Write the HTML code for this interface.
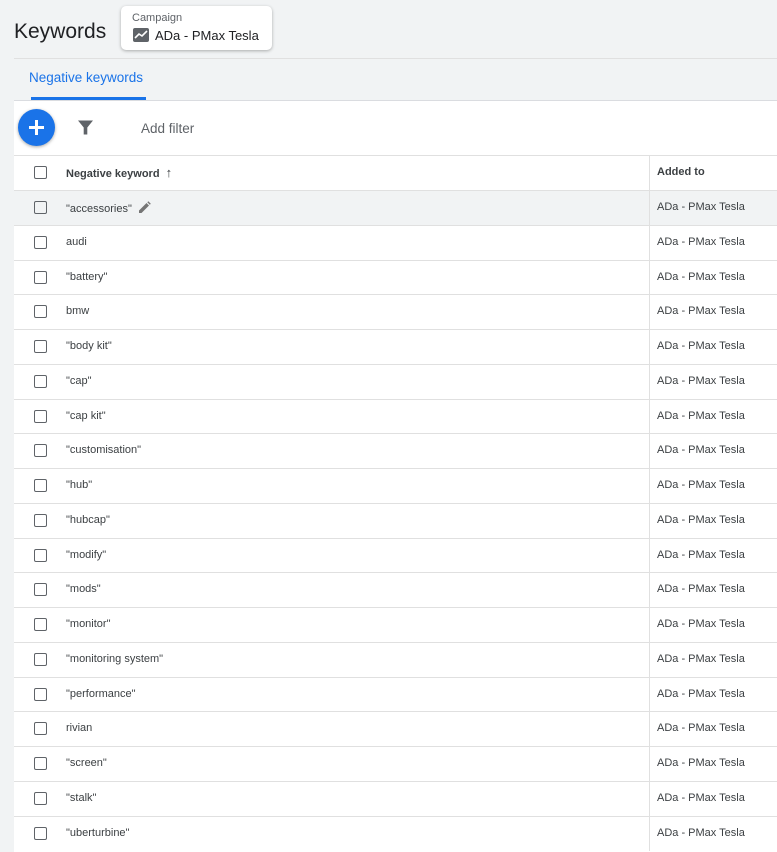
<!DOCTYPE html>
<html><head><style>
*{box-sizing:border-box;margin:0;padding:0}
body{width:777px;height:852px;overflow:hidden;background:#f1f3f4;font-family:"Liberation Sans",Arial,sans-serif;position:relative}
.title{position:absolute;left:14px;top:20px;font-size:21px;color:#202124}
.camp{position:absolute;left:121px;top:6px;width:151px;height:44px;background:#fff;border-radius:5px;box-shadow:0 1px 3px rgba(0,0,0,.3)}
.camp .l{position:absolute;left:11px;top:6px;font-size:11px;color:#5f6368}
.camp .v{position:absolute;left:34px;top:22px;font-size:13px;color:#202124}
.camp svg{position:absolute;left:12px;top:22px}
.hl{position:absolute;left:14px;top:58px;right:0;height:1px;background:#e0e0e0}
.tab{position:absolute;left:29px;top:70px;font-size:13.5px;color:#1a73e8}
.tabline{position:absolute;left:31px;top:97px;width:115px;height:3px;background:#1a73e8}
.main{position:absolute;left:14px;top:100px;right:0;bottom:0;background:#fff;border-top:1px solid #dadce0}
.fab{position:absolute;left:4px;top:8px;width:37px;height:37px;border-radius:50%;background:#1a73e8;box-shadow:0 1px 3px rgba(0,0,0,.35)}
.fab:before,.fab:after{content:"";position:absolute;background:#fff;left:11px;top:17px;width:15px;height:3px}
.fab:after{left:17px;top:11px;width:3px;height:15px}
.filt{position:absolute;left:63px;top:18px}
.addf{position:absolute;left:127px;top:20px;font-size:13.5px;color:#5f6368}
.row{position:absolute;left:0;right:0;height:35px;border-top:1px solid #e0e0e0;font-size:11px;color:#3c4043}
.cb{position:absolute;left:20px;top:10px;width:13px;height:13px;border:1.5px solid #5f6368;border-radius:2px}
.k{position:absolute;left:52px;top:10px}
.a{position:absolute;left:643px;top:10px}
.div{position:absolute;left:635px;top:0;bottom:0;width:1px;background:#e0e0e0}
.hdr{font-weight:bold;color:#3c4043}
</style></head><body>
<div class="title">Keywords</div>
<div class="camp"><div class="l">Campaign</div>
<svg width="16" height="14" viewBox="0 0 16 14"><rect x="0" y="0" width="16" height="14" rx="2" fill="#5f6368"/><path d="M2 10 L6 6 L9 8 L14 3" stroke="#fff" stroke-width="1.6" fill="none"/></svg>
<div class="v">ADa - PMax Tesla</div></div>
<div class="hl"></div>
<div class="tab">Negative keywords</div>
<div class="tabline"></div>
<div class="main">
<div class="fab"></div>
<svg class="filt" width="17" height="17" viewBox="0 0 17 17"><path d="M1 1.5 H16 L10.3 8.5 V15.5 H6.7 V8.5 Z" fill="#5f6368"/></svg>
<div class="addf">Add filter</div>
<div id="rows"></div>
</div>
<script>
var k=['"accessories"','audi','"battery"','bmw','"body kit"','"cap"','"cap kit"','"customisation"','"hub"','"hubcap"','"modify"','"mods"','"monitor"','"monitoring system"','"performance"','rivian','"screen"','"stalk"','"uberturbine"'];
var h='<div class="row hdr" style="top:54px"><div class="cb"></div><div class="k" style="top:9px">Negative keyword &nbsp;<span style="font-weight:normal;font-size:13px">&#8593;</span></div><div class="div"></div><div class="a">Added to</div></div>';
for(var i=0;i<k.length;i++){var t=89+i*34.75;
h+='<div class="row" style="top:'+t+'px;'+(i==0?'background:#f1f3f4':'')+'"><div class="cb"></div><div class="k">'+k[i]+(i==0?' <svg width="13" height="13" viewBox="0 0 13 13" style="vertical-align:-2px;margin-left:3px"><path d="M1 12 L1 9.5 L8.5 2 L11 4.5 L3.5 12 Z M9.3 1.2 L10.3 0.2 L12.8 2.7 L11.8 3.7 Z" fill="#757575"/></svg>':'')+'</div><div class="div"></div><div class="a">ADa - PMax Tesla</div></div>';}
document.getElementById('rows').innerHTML=h;
</script>
</body></html>
